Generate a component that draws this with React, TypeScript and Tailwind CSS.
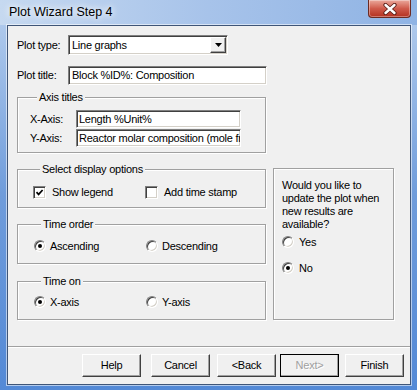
import type { ReactNode } from "react";

const sunken =
  "bg-white border border-t-[#808080] border-l-[#808080] border-r-white border-b-white shadow-[inset_1px_1px_0_#404040,inset_-1px_-1px_0_#d4d0c8]";

const raised =
  "bg-[#f0f0f0] border border-t-white border-l-white border-r-[#404040] border-b-[#404040] shadow-[inset_-1px_-1px_0_#a0a0a0]";

function CheckBox({ checked }: { checked?: boolean }) {
  return (
    <span className={`w-[13px] h-[13px] shrink-0 flex items-center justify-center ${sunken}`}>
      {checked && (
        <svg width="9" height="9" viewBox="0 0 9 9">
          <path d="M1.5 4.2 L3.6 6.4 L7.6 2" stroke="#000" strokeWidth="1.7" fill="none" />
        </svg>
      )}
    </span>
  );
}

function Radio({ checked }: { checked?: boolean }) {
  return (
    <span
      className={`w-[12px] h-[12px] rounded-full shrink-0 flex items-center justify-center ${sunken}`}
    >
      {checked && <span className="w-[4px] h-[4px] rounded-full bg-black" />}
    </span>
  );
}

function GroupBox({
  label,
  className,
  children,
}: {
  label: string;
  className: string;
  children: ReactNode;
}) {
  return (
    <div
      className={`border border-[#a0a0a0] shadow-[inset_1px_1px_0_#fff,1px_1px_0_#fff] ${className}`}
    >
      <div className="-mt-[7px] ml-[7px] px-[2px] w-fit bg-[#f0f0f0] leading-[13px]">{label}</div>
      {children}
    </div>
  );
}

function Option({ label, radio, checked }: { label: string; radio?: boolean; checked?: boolean }) {
  return (
    <div className="w-[112px] h-[14px] flex items-center">
      {radio ? <Radio checked={checked} /> : <CheckBox checked={checked} />}
      <span className={radio ? "ml-[4px]" : "ml-[6px]"}>{label}</span>
    </div>
  );
}

function Button({ label, disabled, className }: { label: string; disabled?: boolean; className?: string }) {
  return (
    <div
      className={`w-[59px] h-[23px] flex items-center justify-center ${raised} ${
        disabled ? "outline outline-1 outline-black -outline-offset-1 text-[#a0a0a0] [text-shadow:1px_1px_0_#fff]" : ""
      } ${className ?? ""}`}
    >
      {label}
    </div>
  );
}

export default function App() {
  return (
    <div className="w-[417px] h-[390px] flex flex-col overflow-hidden bg-gradient-to-b from-[#b7cfee] via-[#6f9cdb] to-[#5389d6] font-['Liberation_Sans',Arial,sans-serif] text-[11px] leading-[13px] tracking-[-0.25px] text-black">
      {/* Title bar */}
      <div className="h-[25px] shrink-0 flex justify-between bg-gradient-to-r from-[#c6d9f0] via-[#a7c3ea] to-[#8fb3e4]">
        <span className="pl-[9px] pt-[5px] text-[12.5px] leading-[14px] tracking-normal [text-shadow:0_0_6px_#fff,0_0_10px_#fff]">
          Plot Wizard Step 4
        </span>
        <div className="mr-[6px] w-[43px] h-[18px] rounded-b-[4px] border border-t-0 border-[#6b2a22] bg-gradient-to-b from-[#eaa89c] via-[#cf5a4b] to-[#b3301f] shadow-[inset_0_0_0_1px_rgba(255,255,255,0.35)] flex items-center justify-center">
          <svg width="14" height="12" viewBox="0 0 14 12">
            <path d="M2.5 2 L11.5 10 M11.5 2 L2.5 10" stroke="#5a1e18" strokeWidth="4.2" strokeLinecap="round" />
            <path d="M2.5 2 L11.5 10 M11.5 2 L2.5 10" stroke="#fff" strokeWidth="2.4" strokeLinecap="round" />
          </svg>
        </div>
      </div>

      {/* Client area */}
      <div className="ml-[7px] w-[404px] h-[360px] bg-[#f0f0f0] border border-[#3f5577] shadow-[0_0_0_1px_rgba(255,255,255,0.55)] flex flex-col">
        <div className="pl-[9px] flex flex-col">
          <div className="mt-[9px] flex items-center">
            <span className="w-[51px]">Plot type:</span>
            <div className={`w-[160px] h-[20px] pl-[3px] pr-[1px] flex items-center justify-between ${sunken}`}>
              <span>Line graphs</span>
              <span className={`w-[16px] h-[16px] flex items-center justify-center ${raised}`}>
                <svg width="7" height="4" viewBox="0 0 7 4">
                  <path d="M0 0h7L3.5 4z" fill="#000" />
                </svg>
              </span>
            </div>
          </div>

          <div className="mt-[11px] flex items-center">
            <span className="w-[51px]">Plot title:</span>
            <div className={`w-[199px] h-[19px] pl-[3px] flex items-center ${sunken}`}>
              Block %ID%: Composition
            </div>
          </div>

          <GroupBox label="Axis titles" className="mt-[12px] w-[249px] h-[56px] pl-[12px]">
            <div className="mt-[6px] flex items-center">
              <span className="w-[46px]">X-Axis:</span>
              <div className={`w-[165px] h-[18px] pl-[2px] flex items-center ${sunken}`}>Length %Unit%</div>
            </div>
            <div className="mt-[1px] flex items-center">
              <span className="w-[46px]">Y-Axis:</span>
              <div
                className={`w-[165px] h-[18px] pl-[2px] flex items-center overflow-hidden whitespace-nowrap ${sunken}`}
              >
                Reactor molar composition (mole fraction)
              </div>
            </div>
          </GroupBox>

          <div className="mt-[15px] flex items-start">
            <div className="w-[249px] flex flex-col">
              <GroupBox label="Select display options" className="mt-[1px] h-[39px] pl-[15px]">
                <div className="mt-[9px] flex">
                  <Option label="Show legend" checked />
                  <Option label="Add time stamp" />
                </div>
              </GroupBox>
              <GroupBox label="Time order" className="mt-[16px] h-[40px] pl-[16px]">
                <div className="mt-[8px] flex">
                  <Option label="Ascending" radio checked />
                  <Option label="Descending" radio />
                </div>
              </GroupBox>
              <GroupBox label="Time on" className="mt-[17px] h-[39px] pl-[16px]">
                <div className="mt-[7px] flex">
                  <Option label="X-axis" radio checked />
                  <Option label="Y-axis" radio />
                </div>
              </GroupBox>
            </div>

            <div className="ml-[7px] w-[121px] h-[152px] pl-[8px] pt-[10px] border border-[#a0a0a0] shadow-[inset_1px_1px_0_#fff,1px_1px_0_#fff]">
              <p>
                Would you like to
                <br />
                update the plot when
                <br />
                new results are
                <br />
                available?
              </p>
              <div className="mt-[4px] h-[14px] flex items-center">
                <Radio />
                <span className="ml-[5px]">Yes</span>
              </div>
              <div className="mt-[12px] h-[14px] flex items-center">
                <Radio checked />
                <span className="ml-[5px]">No</span>
              </div>
            </div>
          </div>
        </div>

        {/* Separator */}
        <div className="mt-[26px] h-[2px] border-t border-[#a0a0a0] border-b border-b-white" />

        {/* Buttons */}
        <div className="mt-[6px] pr-[6px] flex justify-end">
          <Button label="Help" />
          <Button label="Cancel" className="ml-[10px]" />
          <Button label="<Back" className="ml-[7px]" />
          <Button label="Next>" disabled className="ml-[4px]" />
          <Button label="Finish" className="ml-[6px]" />
        </div>
      </div>
    </div>
  );
}
